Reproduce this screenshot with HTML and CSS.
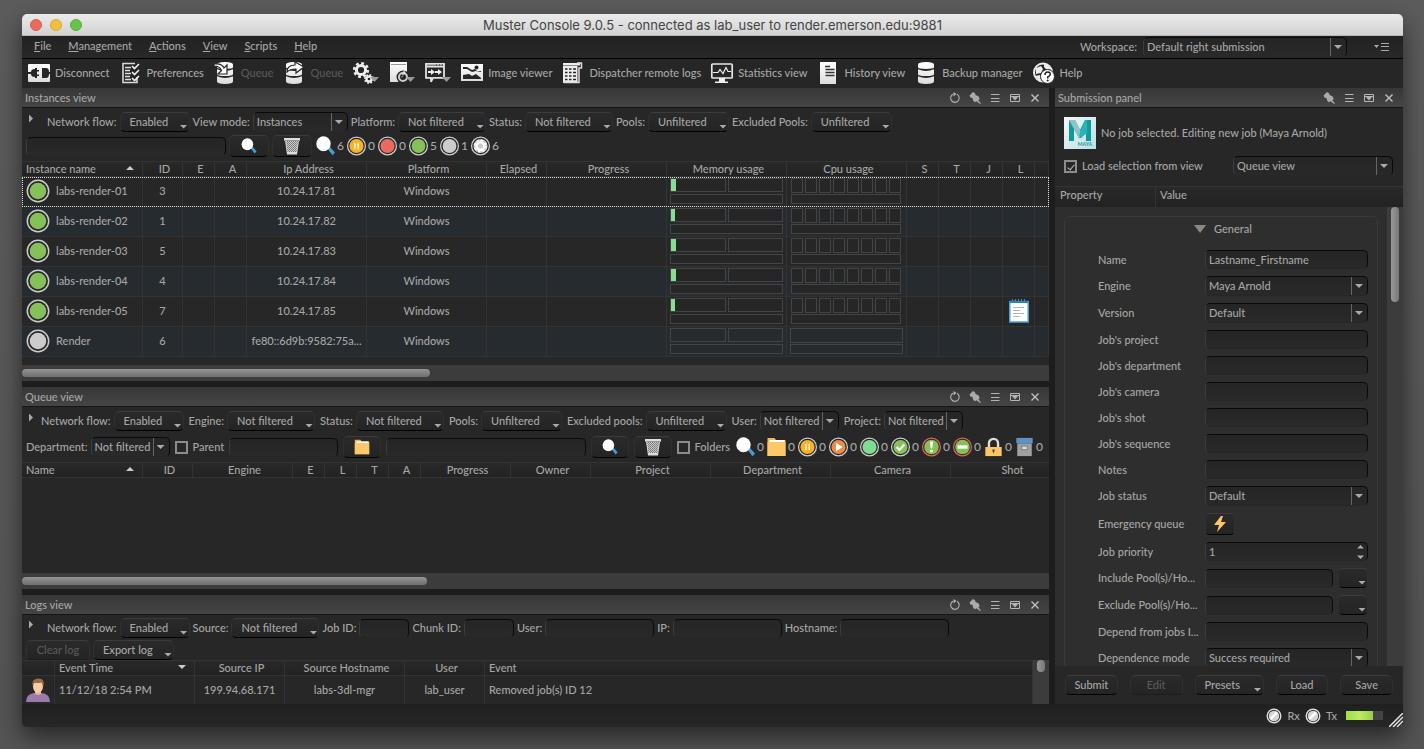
FILE: index.html
```html
<!DOCTYPE html>
<html lang="en">
<head>
<meta charset="utf-8">
<title>Muster Console</title>
<link rel="stylesheet" href="styles.css">
</head>
<body>
<svg class="defs" aria-hidden="true">
  <defs>
    <linearGradient id="shade" x1="0" y1="0" x2="0" y2="1"><stop offset="0" stop-color="#fff"/><stop offset="1" stop-color="#dcdcdc"/></linearGradient>
    <pattern id="mesh" width="2" height="2" patternUnits="userSpaceOnUse"><rect width="2" height="2" fill="#c8c8c8"/><rect width="1" height="1" fill="#777"/><rect x="1" y="1" width="1" height="1" fill="#888"/></pattern>
    <symbol id="ring" viewBox="0 0 24 24"><circle cx="12" cy="12" r="10.7" fill="#262626" stroke="#ccc" stroke-width="1.5"/></symbol>
    <symbol id="host-on" viewBox="0 0 24 24"><use href="#ring"/><circle cx="12" cy="12" r="8.3" fill="#86c058"/></symbol>
    <symbol id="host-off" viewBox="0 0 24 24"><use href="#ring"/><circle cx="12" cy="12" r="8.3" fill="#ccc"/></symbol>
    <symbol id="s-pause" viewBox="0 0 24 24"><use href="#ring"/><circle cx="12" cy="12" r="8.5" fill="#fdb022"/><path d="M10 8v8M14 8v8" stroke="#fff0c8" stroke-width="2"/></symbol>
    <symbol id="s-red" viewBox="0 0 24 24"><use href="#ring"/><circle cx="12" cy="12" r="8.5" fill="#ea6b5e"/></symbol>
    <symbol id="s-gear" viewBox="0 0 24 24"><use href="#ring"/><circle cx="12" cy="12" r="8.5" fill="#c9c9c9"/><circle cx="12" cy="12" r="4.6" fill="none" stroke="#fff" stroke-width="3.2"/><circle cx="12" cy="12" r="6.8" fill="none" stroke="#fff" stroke-width="2" stroke-dasharray="2.6 2.74"/></symbol>
    <symbol id="s-play" viewBox="0 0 24 24"><use href="#ring"/><circle cx="12" cy="12" r="8.5" fill="#ef8b45"/><path d="M9 7l8 5-8 5z" fill="#fff"/></symbol>
    <symbol id="s-idle" viewBox="0 0 24 24"><use href="#ring"/><circle cx="12" cy="12" r="8.5" fill="#80dc91"/></symbol>
    <symbol id="s-done" viewBox="0 0 24 24"><use href="#ring"/><circle cx="12" cy="12" r="8.5" fill="#86c058"/><path d="M7.5 12l3.3 3.5L16.5 9" fill="none" stroke="#fff" stroke-width="2.6"/></symbol>
    <symbol id="s-warn" viewBox="0 0 24 24"><circle cx="12" cy="12" r="10.7" fill="#262626" stroke="#e2625a" stroke-width="1.5"/><circle cx="12" cy="12" r="8.7" fill="#86c058"/><path d="M10.2 5.5h3.6l-.7 8h-2.2z" fill="#fff"/><circle cx="12" cy="16.8" r="1.8" fill="#fff"/></symbol>
    <symbol id="s-stop" viewBox="0 0 24 24"><circle cx="12" cy="12" r="10.7" fill="#262626" stroke="#e2625a" stroke-width="1.5"/><circle cx="12" cy="12" r="8.7" fill="#86c058"/><path d="M6 10h12v4H6z" fill="#fff"/></symbol>
    <symbol id="lens" viewBox="0 0 20 20"><path d="M11.5 12l2-2 6 6.5-2.5 2.8z" fill="#469ddb"/><ellipse cx="8" cy="7.8" rx="7.2" ry="7.5" fill="#fff"/></symbol>
    <symbol id="trash" viewBox="0 0 18 18"><path d="M1 1h16v3l-1-.5-2 14H4L2 3.500 1 4z" fill="#ddd"/><path d="M3 4h12l-1.500 11h-9z" fill="url(#mesh)"/><path d="M1 3.500h16" stroke="#999"/></symbol>
    <symbol id="folder" viewBox="0 0 20 20"><path d="M1 1h7l1.500 2H19v16H1z" fill="#f0b755"/><path d="M3 3h15v2H3z" fill="#fff"/><path d="M1 5h18v14H1z" fill="#fdc968"/></symbol>
    <symbol id="lock" viewBox="0 0 20 22"><path d="M5 12V7a5 5 0 0 1 10 0v5" fill="none" stroke="#ddd" stroke-width="2.6"/><path d="M1 11h18v10H1z" fill="#fdc563"/><circle cx="10" cy="15" r="1.400" fill="#555"/><path d="M9.500 15h1v3h-1z" fill="#555"/></symbol>
    <symbol id="archive" viewBox="0 0 20 22"><path d="M2 7h16v14H2z" fill="#a0a0a0"/><path d="M1 1h18v6H1z" fill="#5b92c8"/><rect x="7" y="10" width="6" height="4" fill="#ddd" stroke="#777"/></symbol>
    <symbol id="t-refresh" viewBox="0 0 12 12"><path d="M8 2.300A4.300 4.300 0 1 1 4 2.200" fill="none" stroke="#b4b4b4" stroke-width="1.100"/><path d="M4.500 0v4.500L7.500 2z" fill="#b4b4b4"/></symbol>
    <symbol id="t-pin" viewBox="0 0 12 12"><path d="M.5 3.500L4 0l2 1.200.5 1.800 3 1.300 1.200 3-1.400.9 2.700 3.300-.8.500L7.500 9.300l-1.800.9-1.600-1.700-.6-2.400L1.500 5.500z" fill="#aaa"/></symbol>
    <symbol id="t-menu" viewBox="0 0 12 12"><path d="M2 2.500h8.500M2 6.500h8.500M2 9.500h8.500" stroke="#b4b4b4"/></symbol>
    <symbol id="t-float" viewBox="0 0 12 12"><path d="M1.500 2.500h9v7h-9zM1 4.500h10" fill="none" stroke="#b4b4b4"/><path d="M3 5h6L6 8.500z" fill="#b4b4b4"/></symbol>
    <symbol id="t-close" viewBox="0 0 12 12"><path d="M2.500 2.500l7 7M9.500 2.500l-7 7" stroke="#c0c0c0" stroke-width="1.400"/></symbol>
    <symbol id="db" viewBox="0 0 22 22"><path d="M3 2.500Q3 0 11 0t8 2.500v2.800Q19 7 11 7T3 5.300zM3 7.200Q7 9 11 9t8-1.800v5Q19 14 11 14T3 12.200zM3 14.300Q7 16 11 16t8-1.700v5Q19 22 11 22t-8-2.700z" fill="url(#shade)"/></symbol>
    <symbol id="led" viewBox="0 0 16 16"><circle cx="8" cy="8" r="6.800" fill="#222" stroke="#ddd" stroke-width="1.400"/><circle cx="8" cy="8" r="5.300" fill="#d4d4d4"/><path d="M4.500 11L11 4.500" stroke="#fff" stroke-width="2.500"/></symbol>
  </defs>
</svg>
<div class="window">
  <header class="titlebar">
    <div class="lights"><span class="light close"></span><span class="light min"></span><span class="light max"></span></div>
    <h1>Muster Console 9.0.5 - connected as lab_user to render.emerson.edu:9881</h1>
  </header>

  <div class="menubar">
    <nav class="menus">
      <button><u>F</u>ile</button><button><u>M</u>anagement</button><button><u>A</u>ctions</button><button><u>V</u>iew</button><button><u>S</u>cripts</button><button><u>H</u>elp</button>
    </nav>
    <label for="workspace">Workspace:</label>
    <span class="combo w-workspace"><select id="workspace"><option>Default right submission</option></select></span>
    <button class="layout" aria-label="Layout menu"><svg width="15" height="10" viewBox="0 0 15 10"><path d="M0 3h5L2.500 6z" fill="#aaa"/><path d="M7 1.500h8M7 4.500h8M7 8.500h8" stroke="#aaa"/></svg></button>
  </div>

  <div class="toolbar">
    <button><svg viewBox="0 0 22 22"><rect y="2" width="22" height="18" rx="1" fill="url(#shade)"/><path d="M0 10h3q0-3 4-3V6h2v2h2v1.500H9v3h2V14H9v2H7v-1q-4 0-4-3H0zM22 10h-1q0-4-3-4h-4v10h4q3 0 3-4h1z" fill="#262626"/></svg>Disconnect</button>
    <button><svg viewBox="0 0 22 22"><path d="M15 1.500H3v19h14V15" fill="none" stroke="#d8d8d8" stroke-width="1.600"/><path d="M5 5.500h6M5 8.500h5M5 11.500h6M5 14.500h5M5 17.500h6" stroke="#ddd" stroke-width="1.400"/><path d="M12 4l2.500 2.500L19 2M12 10l2.500 2.500L19 8M12 16l2.500 2.500L19 14" fill="none" stroke="#eee" stroke-width="1.700"/></svg>Preferences</button>
    <button disabled><svg viewBox="0 0 22 22"><use href="#db" width="22" height="22"/><path d="M0 2q8-1 10 4l3-3v9H4l3.500-3.500Q6 4 0 4z" fill="#fff" stroke="#262626" stroke-width="1.200"/></svg>Queue</button>
    <button disabled><svg viewBox="0 0 22 22"><use href="#db" width="22" height="22"/><path d="M4 10Q4 3 12 3V0l9 5-8 6V7Q7 7 4 10z" fill="#fff" stroke="#262626" stroke-width="1.200"/></svg>Queue</button>
    <button aria-label="Services"><svg class="wide" viewBox="0 0 26 22"><circle cx="8" cy="8" r="4.600" fill="none" stroke="#eee" stroke-width="3"/><circle cx="8" cy="8" r="6.800" fill="none" stroke="#eee" stroke-width="2.600" stroke-dasharray="2.800 2.540"/><circle cx="16" cy="17" r="2.500" fill="none" stroke="#eee" stroke-width="2.400"/><circle cx="16" cy="17" r="4" fill="none" stroke="#eee" stroke-width="2" stroke-dasharray="1.600 1.540"/><path d="M17 15h9l-4.500 5z" fill="#999"/></svg></button>
    <button aria-label="Templates"><svg class="wide" viewBox="0 0 26 22"><path d="M1 0h17v9L9 20H1z" fill="url(#shade)"/><path d="M2 2.500h15" stroke="#999"/><circle cx="14" cy="15" r="4" fill="none" stroke="#262626" stroke-width="5"/><circle cx="14" cy="15" r="4" fill="none" stroke="#ccc" stroke-width="2"/><path d="M15 8l2 4-4 1z" fill="#ddd"/><path d="M17 15h9l-4.500 5z" fill="#999"/></svg></button>
    <button aria-label="Commands"><svg class="wide" viewBox="0 0 26 22"><path d="M1 1.800h18v14H8l-2 4v-4H1zM1 4.500h18" fill="none" stroke="#e2e2e2" stroke-width="1.800"/><path d="M11 3h1M14 3h1M17 3h1" stroke="#262626"/><path d="M3 9h3V7l4 3-4 3v-2H3zM10 9h3V7l4 3-4 3v-2h-3z" fill="#eee"/><path d="M17 15h9l-4.500 5z" fill="#999"/></svg></button>
    <button><svg viewBox="0 0 22 22"><path d="M0 2h22v17H0z" fill="url(#shade)"/><path d="M2 5h4l5 3 3-1 2 2h4v1l-5-1-4 1-5-3H2zM2 13l6-1 3 2 4-2 5 4v1H2z" fill="#262626"/><circle cx="15.500" cy="5.500" r="2" fill="#262626"/></svg>Image viewer</button>
    <button><svg viewBox="0 0 22 22"><path d="M1 1h17v2.500H1zM1 4h14.500v17H1z" fill="#eee"/><path d="M15 1h4.500v5H17v14.500H2" fill="none" stroke="#ddd" stroke-width="1.500"/><path d="M3 7h2.500M7 7h2.500M11 7h3M3 10.500h2.500M7 10.500h2.500M11 10.500h3M3 14h2.500M7 14h2.500M11 14h3M3 17.500h2.500M7 17.500h2.500M11 17.500h3" stroke="#262626" stroke-width="1.700"/></svg>Dispatcher remote logs</button>
    <button><svg viewBox="0 0 22 22"><rect x=".8" y="2" width="20.400" height="14" rx="1" fill="none" stroke="#e6e6e6" stroke-width="1.700"/><path d="M2 10.500h5l2-3 3 4 3-6 2 4h3" fill="none" stroke="#eee" stroke-width="1.200"/><path d="M8 16h6v3.500h3V21H4v-1.500h4z" fill="#eee"/></svg>Statistics view</button>
    <button><svg viewBox="0 0 22 22"><path d="M3 0h16v22H3z" fill="url(#shade)"/><path d="M8 4.500h5M8.500 7.500h9M8.500 10.500h9M8.500 13.500h9" stroke="#333" stroke-width="1.400"/></svg>History view</button>
    <button><svg viewBox="0 0 22 22"><use href="#db" width="22" height="22"/></svg>Backup manager</button>
    <button><svg viewBox="0 0 22 22"><circle cx="10" cy="10.500" r="9" fill="#262626" stroke="#eee" stroke-width="2"/><path d="M3 6l5-2 2 3-2 4-5 1zM11 2l5 1 2 4-4 1-3-3zM2 14l5-1 2 4-2 2z" fill="#eee"/><circle cx="14.500" cy="14.500" r="7" fill="#fff" stroke="#262626"/><path d="M12 13q0-3 2.700-3t2.500 2.500q0 1.500-2.500 2.500v1.500" fill="none" stroke="#222" stroke-width="1.500"/><circle cx="14.700" cy="18.500" r="1" fill="#222"/></svg>Help</button>
  </div>

  <div class="workarea">
    <main class="views">
      <section class="dock">
        <div class="dock-title"><h2>Instances view</h2>
          <button aria-label="Refresh"><svg><use href="#t-refresh"/></svg></button><button aria-label="Pin"><svg><use href="#t-pin"/></svg></button><button aria-label="Menu"><svg><use href="#t-menu"/></svg></button><button aria-label="Float"><svg><use href="#t-float"/></svg></button><button aria-label="Close"><svg><use href="#t-close"/></svg></button>
        </div>
        <div class="filters instances">
          <div class="row">
            <button class="caret" aria-label="Expand"></button>
            <label for="i-flow">Network flow:</label><button class="pick w70" id="i-flow">Enabled</button>
            <label for="i-mode">View mode:</label><span class="combo w95"><select id="i-mode"><option>Instances</option></select></span>
            <label for="i-plat">Platform:</label><button class="pick w88" id="i-plat">Not filtered</button>
            <label for="i-stat">Status:</label><button class="pick w88" id="i-stat">Not filtered</button>
            <label for="i-pool">Pools:</label><button class="pick w81" id="i-pool">Unfiltered</button>
            <label for="i-excl">Excluded Pools:</label><button class="pick w81" id="i-excl">Unfiltered</button>
          </div>
          <div class="row">
            <input class="w200" type="text" aria-label="Search instances">
            <button class="tool w40" aria-label="Search"><svg width="16" height="16"><use href="#lens"/></svg></button>
            <button class="tool w40" aria-label="Clear"><svg width="18" height="18"><use href="#trash"/></svg></button>
            <div class="counts">
              <span><svg><use href="#lens"/></svg>6</span><span><svg><use href="#s-pause"/></svg>0</span><span><svg><use href="#s-red"/></svg>0</span><span><svg><use href="#host-on"/></svg>5</span><span><svg><use href="#host-off"/></svg>1</span><span><svg><use href="#s-gear"/></svg>6</span>
            </div>
          </div>
        </div>
        <div class="table-box">
          <table class="grid">
            <colgroup><col class="c121"><col class="c40"><col class="c32"><col class="c32"><col class="c120"><col class="c120"><col class="c60"><col class="c120"><col class="c120"><col class="c120"><col class="c32"><col class="c32"><col class="c32"><col class="c32"><col></colgroup>
            <thead><tr><th class="left sort up">Instance name</th><th>ID</th><th>E</th><th>A</th><th>Ip Address</th><th>Platform</th><th>Elapsed</th><th>Progress</th><th>Memory usage</th><th>Cpu usage</th><th>S</th><th>T</th><th>J</th><th>L</th><th></th></tr></thead>
            <tbody>
              <tr class="current"><td><div class="name"><svg><use href="#host-on"/></svg>labs-render-01</div></td><td>3</td><td></td><td></td><td>10.24.17.81</td><td>Windows</td><td></td><td></td><td class="meter"><div class="mem"><i><b></b></i><i></i></div><div class="total"></div></td><td class="meter"><div class="cpu"><i></i><i></i><i></i><i></i><i></i><i></i><i></i><i></i></div><div class="total cores"></div></td><td></td><td></td><td></td><td></td><td></td></tr>
              <tr><td><div class="name"><svg><use href="#host-on"/></svg>labs-render-02</div></td><td>1</td><td></td><td></td><td>10.24.17.82</td><td>Windows</td><td></td><td></td><td class="meter"><div class="mem"><i><b class="low"></b></i><i></i></div><div class="total"></div></td><td class="meter"><div class="cpu"><i></i><i></i><i></i><i></i><i></i><i></i><i></i><i></i></div><div class="total cores"></div></td><td></td><td></td><td></td><td></td><td></td></tr>
              <tr><td><div class="name"><svg><use href="#host-on"/></svg>labs-render-03</div></td><td>5</td><td></td><td></td><td>10.24.17.83</td><td>Windows</td><td></td><td></td><td class="meter"><div class="mem"><i><b></b></i><i></i></div><div class="total"></div></td><td class="meter"><div class="cpu"><i></i><i></i><i></i><i></i><i></i><i></i><i></i><i></i></div><div class="total cores"></div></td><td></td><td></td><td></td><td></td><td></td></tr>
              <tr><td><div class="name"><svg><use href="#host-on"/></svg>labs-render-04</div></td><td>4</td><td></td><td></td><td>10.24.17.84</td><td>Windows</td><td></td><td></td><td class="meter"><div class="mem"><i><b></b></i><i></i></div><div class="total"></div></td><td class="meter"><div class="cpu"><i></i><i></i><i></i><i></i><i></i><i></i><i></i><i></i></div><div class="total cores"></div></td><td></td><td></td><td></td><td></td><td></td></tr>
              <tr><td><div class="name"><svg><use href="#host-on"/></svg>labs-render-05</div></td><td>7</td><td></td><td></td><td>10.24.17.85</td><td>Windows</td><td></td><td></td><td class="meter"><div class="mem"><i><b class="low"></b></i><i></i></div><div class="total"></div></td><td class="meter"><div class="cpu"><i></i><i></i><i></i><i></i><i></i><i></i><i></i><i></i></div><div class="total cores"></div></td><td></td><td></td><td></td><td><svg class="note" viewBox="0 0 20 24"><rect x=".8" y="2.500" width="18.400" height="20.500" fill="#fff" stroke="#4ba3dd" stroke-width="1.500"/><path d="M1 3h18" stroke="#2f80bd" stroke-width="2"/><path d="M3.500 0v4M6.500 0v4M9.500 0v4M12.500 0v4M15.500 0v4" stroke="#3a86bd"/><path d="M4 8.500h11M4 11.500h7M4 14.500h11M4 17.500h7" stroke="#b5b5b5"/></svg></td><td></td></tr>
              <tr class="offline"><td><div class="name"><svg><use href="#host-off"/></svg>Render</div></td><td>6</td><td></td><td></td><td>fe80::6d9b:9582:75a...</td><td>Windows</td><td></td><td></td><td class="meter"><div class="mem"><i></i><i></i></div><div class="total"></div></td><td class="meter one"><div class="cpu"><i></i></div><div class="total"></div></td><td></td><td></td><td></td><td></td><td></td></tr>
            </tbody>
          </table>
        </div>
        <div class="hscroll"><div class="thumb instances-thumb"></div></div>
      </section>

      <section class="dock fill">
        <div class="dock-title"><h2>Queue view</h2>
          <button aria-label="Refresh"><svg><use href="#t-refresh"/></svg></button><button aria-label="Pin"><svg><use href="#t-pin"/></svg></button><button aria-label="Menu"><svg><use href="#t-menu"/></svg></button><button aria-label="Float"><svg><use href="#t-float"/></svg></button><button aria-label="Close"><svg><use href="#t-close"/></svg></button>
        </div>
        <div class="filters queue">
          <div class="row">
            <button class="caret" aria-label="Expand"></button>
            <label for="q-flow">Network flow:</label><button class="pick w70" id="q-flow">Enabled</button>
            <label for="q-eng">Engine:</label><button class="pick w88" id="q-eng">Not filtered</button>
            <label for="q-stat">Status:</label><button class="pick w88" id="q-stat">Not filtered</button>
            <label for="q-pool">Pools:</label><button class="pick w81" id="q-pool">Unfiltered</button>
            <label for="q-excl">Excluded pools:</label><button class="pick w81" id="q-excl">Unfiltered</button>
            <label for="q-user">User:</label><span class="combo w79"><select id="q-user"><option>Not filtered</option></select></span>
            <label for="q-proj">Project:</label><span class="combo w79"><select id="q-proj"><option>Not filtered</option></select></span>
          </div>
          <div class="row">
            <label for="q-dept">Department:</label><span class="combo w79"><select id="q-dept"><option>Not filtered</option></select></span>
            <input type="checkbox" id="q-parent"><label for="q-parent">Parent</label>
            <input class="w109" type="text" aria-label="Parent job">
            <button class="tool w38" aria-label="Browse parent"><svg width="16" height="16"><use href="#folder"/></svg></button>
            <input class="w200" type="text" aria-label="Search queue">
            <button class="tool w38" aria-label="Search"><svg width="16" height="16"><use href="#lens"/></svg></button>
            <button class="tool w38" aria-label="Clear"><svg width="18" height="18"><use href="#trash"/></svg></button>
            <input type="checkbox" id="q-folders"><label for="q-folders">Folders</label>
            <div class="counts">
              <span><svg><use href="#lens"/></svg>0</span><span><svg><use href="#folder"/></svg>0</span><span><svg><use href="#s-pause"/></svg>0</span><span><svg><use href="#s-play"/></svg>0</span><span><svg><use href="#s-idle"/></svg>0</span><span><svg><use href="#s-done"/></svg>0</span><span><svg><use href="#s-warn"/></svg>0</span><span><svg><use href="#s-stop"/></svg>0</span><span><svg><use href="#lock"/></svg>0</span><span><svg><use href="#archive"/></svg>0</span>
            </div>
          </div>
        </div>
        <div class="table-box">
          <table class="grid queue-grid">
            <colgroup><col class="c121"><col class="c50"><col class="c100"><col class="c32"><col class="c32"><col class="c32"><col class="c32"><col class="c90"><col class="c80"><col class="c120"><col class="c120"><col class="c120"><col class="c120"></colgroup>
            <thead><tr><th class="left sort up">Name</th><th>ID</th><th>Engine</th><th>E</th><th>L</th><th>T</th><th>A</th><th>Progress</th><th>Owner</th><th>Project</th><th>Department</th><th>Camera</th><th>Shot</th></tr></thead>
          </table>
        </div>
        <div class="hscroll"><div class="thumb queue-thumb"></div></div>
      </section>

      <section class="dock">
        <div class="dock-title"><h2>Logs view</h2>
          <button aria-label="Refresh"><svg><use href="#t-refresh"/></svg></button><button aria-label="Pin"><svg><use href="#t-pin"/></svg></button><button aria-label="Menu"><svg><use href="#t-menu"/></svg></button><button aria-label="Float"><svg><use href="#t-float"/></svg></button><button aria-label="Close"><svg><use href="#t-close"/></svg></button>
        </div>
        <div class="filters logs">
          <div class="row">
            <button class="caret" aria-label="Expand"></button>
            <label for="l-flow">Network flow:</label><button class="pick w70" id="l-flow">Enabled</button>
            <label for="l-src">Source:</label><button class="pick w88" id="l-src">Not filtered</button>
            <label for="l-job">Job ID:</label><input class="w50" id="l-job" type="text">
            <label for="l-chunk">Chunk ID:</label><input class="w50" id="l-chunk" type="text">
            <label for="l-user">User:</label><input class="w109" id="l-user" type="text">
            <label for="l-ip">IP:</label><input class="w109" id="l-ip" type="text">
            <label for="l-host">Hostname:</label><input class="w109" id="l-host" type="text">
          </div>
          <div class="row"><button class="tool w64" disabled>Clear log</button><button class="pick w81" id="l-export">Export log</button></div>
        </div>
        <div class="log-area">
          <div class="log-clip">
            <table class="grid log-grid">
              <colgroup><col class="c33"><col class="c140"><col class="c90"><col class="c120"><col class="c80"><col></colgroup>
              <thead><tr><th></th><th class="left sort down">Event Time</th><th>Source IP</th><th>Source Hostname</th><th>User</th><th class="left">Event</th></tr></thead>
              <tbody><tr><td class="person"><svg viewBox="0 0 24 24"><path d="M0 24q0-8 8-9h8q8 1 8 9z" fill="#9a7bab"/><path d="M9 12h6v4q-3 2-6 0z" fill="#e9b08a"/><ellipse cx="12" cy="8.500" rx="5" ry="6.500" fill="#f9cba7"/><path d="M6.500 8Q5 1 12 .5T17.500 8Q17 5 15 4.500q-4 1-7.500 0Q7 6 6.500 8z" fill="#9a6c3f"/></svg></td><td class="left">11/12/18 2:54 PM</td><td>199.94.68.171</td><td>labs-3dl-mgr</td><td>lab_user</td><td class="left">Removed job(s) ID 12</td></tr></tbody>
            </table>
          </div>
          <div class="vscroll"><div class="thumb short"></div></div>
        </div>
      </section>
    </main>

    <aside class="submission">
      <div class="dock-title"><h2>Submission panel</h2>
        <button aria-label="Pin"><svg><use href="#t-pin"/></svg></button><button aria-label="Menu"><svg><use href="#t-menu"/></svg></button><button aria-label="Float"><svg><use href="#t-float"/></svg></button><button aria-label="Close"><svg><use href="#t-close"/></svg></button>
      </div>
      <div class="job">
        <div class="maya">
          <svg width="24" height="21" viewBox="0 0 24 21"><path d="M1 0h6l5 10 5-10h6v21h-5V9l-5 9h-2L6 9v12H1z" fill="#109a9d"/><path d="M1 0h6l7 14-3 4L6 9z" fill="#8fc4ca"/><path d="M17 0h2v13l-6 5-2-3z" fill="#27b5b3"/></svg>
          <span>MAYA</span>
        </div>
        <p>No job selected. Editing new job (Maya Arnold)</p>
      </div>
      <div class="load">
        <input type="checkbox" id="load" checked><label for="load">Load selection from view</label>
        <span class="combo"><select aria-label="View"><option>Queue view</option></select></span>
      </div>
      <div class="props-head"><span>Property</span><span>Value</span></div>
      <div class="props">
        <div class="props-clip">
          <div class="group">
            <button class="group-title"><i></i>General</button>
            <div class="field"><label for="p1">Name</label><input id="p1" type="text" value="Lastname_Firstname"></div>
            <div class="field"><label for="p2">Engine</label><span class="combo"><select id="p2"><option>Maya Arnold</option></select></span></div>
            <div class="field"><label for="p3">Version</label><span class="combo"><select id="p3"><option>Default</option></select></span></div>
            <div class="field"><label for="p4">Job's project</label><input id="p4" type="text"></div>
            <div class="field"><label for="p5">Job's department</label><input id="p5" type="text"></div>
            <div class="field"><label for="p6">Job's camera</label><input id="p6" type="text"></div>
            <div class="field"><label for="p7">Job's shot</label><input id="p7" type="text"></div>
            <div class="field"><label for="p8">Job's sequence</label><input id="p8" type="text"></div>
            <div class="field"><label for="p9">Notes</label><input id="p9" type="text"></div>
            <div class="field"><label for="p10">Job status</label><span class="combo"><select id="p10"><option>Default</option></select></span></div>
            <div class="field"><label for="p11">Emergency queue</label><button class="tool w30" id="p11" aria-label="Emergency queue"><svg width="12" height="16" viewBox="0 0 12 16"><path d="M7 0L0 9h5l-2 7 9-10H7l2-6z" fill="#fdc563"/></svg></button></div>
            <div class="field"><label for="p12">Job priority</label><span class="spin"><input id="p12" type="number" value="1"><svg width="7" height="16" viewBox="0 0 7 16"><path d="M0 4.500L3.500 1 7 4.500zM0 11.500h7L3.500 15z" fill="#aaa"/></svg></span></div>
            <div class="field"><label for="p13">Include Pool(s)/Ho...</label><input id="p13" type="text"><button class="pick w30" aria-label="Pick included pools"></button></div>
            <div class="field"><label for="p14">Exclude Pool(s)/Ho...</label><input id="p14" type="text"><button class="pick w30" aria-label="Pick excluded pools"></button></div>
            <div class="field"><label for="p15">Depend from jobs I...</label><input id="p15" type="text"></div>
            <div class="field"><label for="p16">Dependence mode</label><span class="combo"><select id="p16"><option>Success required</option></select></span></div>
          </div>
        </div>
        <div class="vscroll"><div class="thumb"></div></div>
      </div>
      <div class="actions"><button class="tool">Submit</button><button class="tool" disabled>Edit</button><button class="pick presets">Presets</button><button class="tool">Load</button><button class="tool">Save</button></div>
    </aside>
  </div>

  <footer class="statusbar">
    <svg width="16" height="16"><use href="#led"/></svg><span>Rx</span>
    <svg width="16" height="16"><use href="#led"/></svg><span>Tx</span>
    <div class="load-bar"><div></div></div>
    <svg class="grip" width="14" height="14" viewBox="0 0 14 14"><path d="M0 14L14 0M4 14L14 4M8 14l6-6M12 14l2-2" stroke="#e4e4e4" stroke-width="1.500"/></svg>
  </footer>
</div>
</body>
</html>
```
FILE: styles.css
```css
* { box-sizing: border-box; }
body {
  margin: 0;
  height: 100vh;
  padding: 14px 21px 22px 22px;
  overflow: hidden;
  background: linear-gradient(#5c5c5c, #545454);
  color: #a6a6a6;
  font: 500 11px/16px Lato, "Liberation Sans", sans-serif;
  display: flex;
}
.defs { position: absolute; width: 0; height: 0; }
button, input, select { font: inherit; color: inherit; margin: 0; padding: 0; border: 0; background: none; }
button:disabled { color: #5a5a5a; }
h1, h2, p { margin: 0; font: inherit; }
label, span, button, th, td { white-space: nowrap; }
svg { flex: none; display: block; }

.window {
  flex: 1;
  min-width: 0;
  display: flex;
  flex-direction: column;
  border-radius: 5px;
  overflow: hidden;
  background: #1d1d1d;
  box-shadow: 0 10px 24px rgba(0, 0, 0, .55);
}
.titlebar {
  height: 22px;
  display: grid;
  grid-template-columns: 1fr auto 1fr;
  align-items: center;
  background: linear-gradient(#ebebeb, #d2d2d2);
  border-bottom: 1px solid #b5b5b5;
}
.titlebar h1 { color: #444; font: 13px/20px Inter, sans-serif; }
.lights { display: flex; gap: 8px; padding-left: 8px; }
.light { width: 12px; height: 12px; border-radius: 50%; border: 1px solid; }
.close { background: #e96b5c; border-color: #d35c4e; }
.min { background: #f0bf40; border-color: #d9a832; }
.max { background: #68c34a; border-color: #56ad3a; }

.menubar {
  height: 23px;
  display: flex;
  align-items: center;
  background: linear-gradient(#222, #282828);
  border-bottom: 1px solid #000;
}
.menus { flex: 1; display: flex; gap: 17px; padding: 0 0 2px 12px; }
.menubar .combo { margin: 0 27px 0 6px; }
.w-workspace { width: 204px; }
.layout { margin-right: 14px; }

.toolbar { height: 29px; display: flex; align-items: center; gap: 10px; padding: 0 0 1px 6px; background: #262626; }
.toolbar button { display: flex; align-items: center; gap: 5px; }
.toolbar svg { width: 22px; height: 22px; overflow: visible; }
.toolbar .wide { width: 26px; }

.workarea { flex: 1; min-height: 0; display: flex; gap: 6px; }
.views { flex: 1; min-width: 0; display: flex; flex-direction: column; gap: 6px; }
.dock { display: flex; flex-direction: column; background: #272727; }
.fill { flex: 1; min-height: 0; }
.dock-title {
  height: 20px;
  display: flex;
  align-items: center;
  gap: 8px;
  padding: 0 8px 0 3px;
  background: linear-gradient(#373737, #454545);
  border-bottom: 1px solid #151515;
}
.dock-title h2 { flex: 1; }
.dock-title svg { width: 12px; height: 12px; }

.filters { display: flex; flex-direction: column; padding: 4px; }
.row { display: flex; align-items: center; gap: 3px; }
.instances { gap: 3px; }
.queue { gap: 5px; }
.queue .row { gap: 5px; }
.queue label:not(input + label) { margin-right: -2px; }
.logs { gap: 2px; padding: 3px 4px 0; }
.caret { width: 4px; height: 8px; margin: 0 11px 7px 3px; background: #aaa; clip-path: polygon(0 0, 100% 50%, 0 100%); }
.queue .caret { margin-right: 3px; }

.pick, .tool {
  height: 20px;
  flex: none;
  display: flex;
  align-items: center;
  border: 1px solid #303030;
  border-top-color: #3c3c3c;
  border-bottom: 1px solid #000;
  border-radius: 5px;
  background: linear-gradient(#2a2a2a, #242424);
}
.tool { justify-content: center; }
.tool:disabled { border-bottom-color: #1c1c1c; }
.pick { justify-content: space-between; padding: 0 1px 0 9px; }
.pick::after { content: ""; width: 8px; height: 4px; margin: 9px 0 0 auto; background: #aaa; clip-path: polygon(0 0, 100% 0, 50% 100%); }
.row .tool { height: 22px; }
.row .w64 { height: 20px; }
input[type="text"], .combo, .spin {
  border: 1px solid #0a0a0a;
  border-left: 1px solid #3c3c3c;
  border-bottom-color: #272727;
  border-radius: 5px;
  background: linear-gradient(#252525, #292929);
  min-width: 0;
  height: 19px;
  padding-left: 3px;
}
.combo { position: relative; flex: none; height: 20px; display: inline-flex; }
.combo select { appearance: none; flex: 1; min-width: 0; height: 18px; outline: none; }
.combo::before { content: ""; position: absolute; right: 15px; top: 0; bottom: 0; width: 1px; background: #666; }
.combo::after { content: ""; position: absolute; right: 4px; top: 7px; width: 8px; height: 4px; background: #aaa; clip-path: polygon(0 0, 100% 0, 50% 100%); }
input[type="checkbox"] { appearance: none; flex: none; width: 13px; height: 13px; border: 2px solid #8c8c8c; display: grid; place-items: center; }
input[type="checkbox"]:checked::after { content: ""; width: 3px; height: 6px; border: solid #bbb; border-width: 0 1px 1px 0; transform: rotate(40deg); }
.w30 { width: 30px; }
.w38 { width: 38px; }
.w40 { width: 40px; }
.w50 { width: 50px; }
.w64 { width: 64px; }
.w70 { width: 70px; }
.w79 { width: 79px; }
.w81 { width: 81px; }
.w88 { width: 88px; }
.w95 { width: 95px; }
.w109 { width: 109px; }
.w200 { width: 200px; }
.counts { display: flex; }
.counts span { display: flex; align-items: center; width: 31px; gap: 1px; font-size: 12px; }
.counts svg { width: 21px; height: 20px; }

.table-box { flex: 1; overflow: hidden; padding-bottom: 8px; }
.grid { width: 100%; table-layout: fixed; border-spacing: 0; }
.queue-grid { width: 1049px; }
.c32 { width: 32px; }
.c33 { width: 33px; }
.c40 { width: 40px; }
.c50 { width: 50px; }
.c60 { width: 60px; }
.c80 { width: 80px; }
.c90 { width: 90px; }
.c100 { width: 100px; }
.c120 { width: 120px; }
.c121 { width: 121px; }
.c140 { width: 140px; }
.grid th {
  height: 16px;
  padding: 0 0 0 4px;
  line-height: 14px;
  font-weight: inherit;
  border: 1px solid #333;
  border-left: 0;
  background: linear-gradient(#292929, #222);
}
.grid td { height: 30px; padding: 0 0 1px; text-align: center; border: 1px solid #333; border-width: 0 1px 1px 0; }
.grid .left { text-align: left; padding-left: 4px; }
.grid tbody tr:nth-child(even) { background: #262b2f; }
.current { outline: 1px dotted #ddd; outline-offset: -1px; }
.sort::after { content: ""; float: right; width: 8px; height: 4px; margin: 4px 8px 0 0; background: #ccc; clip-path: polygon(0 100%, 50% 0, 100% 100%); }
.sort.down::after { clip-path: polygon(0 0, 100% 0, 50% 100%); }
.name { display: flex; align-items: center; gap: 6px; padding-left: 4px; }
.name svg { width: 24px; height: 24px; }
.note { width: 20px; height: 24px; margin: 0 auto; }
.meter > div { margin: 0 3px; }
.mem, .cpu { display: flex; gap: 2px; }
.meter i { flex: 1; border: 1px solid #444; background: #262626; }
.meter .mem { height: 14px; margin-bottom: 2px; }
.meter .cpu { height: 15px; margin-bottom: 1px; }
.meter .cpu, .meter .cores { margin-left: 4px; margin-right: 5px; }
.meter.one .cpu { margin-left: 3px; margin-right: 3px; }
.meter b { display: block; width: 5px; height: 12px; background: #88dd8e; }
.meter .low { width: 4px; }
.total { height: 10px; border: 1px solid #444; background: #262626; }
.offline .meter i, .offline .total { background: none; }

.hscroll { height: 16px; padding: 4px 0; background: #3c3c3c; }
.thumb { background: linear-gradient(#949494, #6f6f6f); border-radius: 4px; }
.hscroll .thumb { height: 8px; }
.instances-thumb { width: 408px; }
.queue-thumb { width: 405px; }
.vscroll { width: 16px; padding: 0 4px; background: #3c3c3c; }
.vscroll .thumb { height: 95px; background: linear-gradient(90deg, #999, #777); }
.vscroll .short { height: 12px; }
.log-area { display: flex; height: 44px; }
.log-clip { flex: 1; overflow: hidden; }
.person svg { width: 24px; height: 24px; margin: 0 auto; }

.submission { width: 348px; flex: none; display: flex; flex-direction: column; background: #272727; }
.job { display: flex; align-items: center; gap: 5px; padding: 9px 9px 7px; }
.maya { width: 32px; height: 32px; display: flex; flex-direction: column; align-items: center; padding-top: 3px; background: linear-gradient(135deg, #f2f8f8, #bcdfe3); }
.maya span { align-self: flex-end; padding-right: 4px; color: #109a9d; font-size: 5px; line-height: 7px; font-weight: 700; }
.load { display: flex; align-items: center; gap: 5px; padding: 0 10px 10px 9px; }
.load .combo { width: 160px; margin-left: auto; }
.props-head { height: 21px; display: grid; grid-template-columns: 100px 1fr; border-top: 1px solid #333; background: linear-gradient(#292929, #222); }
.props-head span { padding-left: 5px; }
.props-head span:last-child { border-left: 1px solid #333; padding-left: 4px; }
.props { flex: 1; min-height: 0; display: flex; background: #2e2e2e; }
.props-clip { flex: 1; min-height: 0; overflow: hidden; padding: 9px 9px 0; }
.group { display: flex; flex-direction: column; gap: 7px; padding: 4px 9px 9px 33px; border: 1px solid #393939; border-radius: 5px; }
.group-title { align-self: center; display: flex; align-items: center; gap: 8px; padding-right: 20px; margin-bottom: 6px; }
.group-title i { width: 12px; height: 8px; background: #888; clip-path: polygon(0 0, 100% 0, 50% 100%); }
.field { display: flex; align-items: center; gap: 5px; }
.field label { width: 102px; flex: none; }
.field input, .field .combo, .spin { flex: 1; }
.field .tool { height: 22px; }
.spin { display: flex; align-items: center; padding-right: 3px; }
.spin input { min-width: 0; appearance: textfield; }
.spin input::-webkit-inner-spin-button { appearance: none; }
.actions { display: flex; gap: 12px; padding: 9px 10px; }
.actions button { flex: 1; }
.actions .presets { flex: none; width: 69px; }

.statusbar { height: 23px; display: flex; align-items: center; gap: 5px; background: linear-gradient(#202020, #272727); justify-content: flex-end; }
.load-bar { width: 37px; height: 9px; margin: 0 1px 0 4px; background: #444; }
.load-bar div { width: 27px; height: 9px; background: linear-gradient(90deg, #a5dc4c, #b9ee5e, #9ccc4c); }
.grip { align-self: flex-end; }
```
